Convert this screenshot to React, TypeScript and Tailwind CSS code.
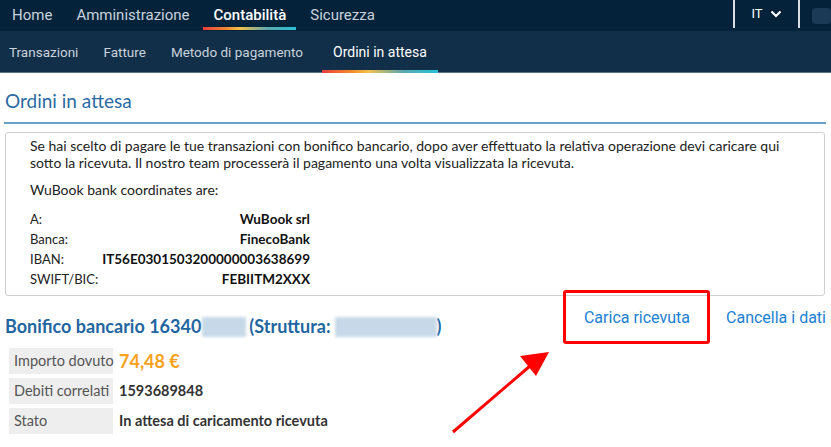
import React from "react";

const grad = "bg-[linear-gradient(90deg,#ea3d3f_0%,#f08a2c_25%,#f3c04a_40%,#5aa7b0_70%,#27c3d6_100%)]";

export default function App() {
  const top = ["Home", "Amministrazione", "Contabilità", "Sicurezza"];
  const sub = ["Transazioni", "Fatture", "Metodo di pagamento", "Ordini in attesa"];
  return (
    <div className="relative w-[831px] h-[447px] overflow-hidden bg-white font-['Lato',sans-serif]">
      {/* top nav */}
      <div className="h-[31px] bg-[#04233b] flex items-stretch font-['Roboto',sans-serif] text-[15px]">
        <div className="flex items-stretch pl-[12px] gap-[24px]">
          {top.map((t) => (
            <div key={t} className="relative flex items-center">
              <span className={t === "Contabilità" ? "text-white font-medium" : "text-[#c9d2db]"}>{t}</span>
              {t === "Contabilità" && (
                <div className={`absolute left-[-11px] right-[-10px] bottom-[1px] h-[3px] ${grad}`} />
              )}
            </div>
          ))}
        </div>
        <div className="ml-auto flex items-stretch">
          <div className="w-[67px] border-l-2 border-r-2 border-[#d8dde2] h-[28px] flex items-center justify-center gap-[7px]">
            <span className="text-white text-[13px]">IT</span>
            <svg width="12" height="8" viewBox="0 0 12 8"><path d="M1.5 1.5 6 6l4.5-4.5" stroke="#fff" strokeWidth="2.2" fill="none" /></svg>
          </div>
          <div className="w-[31px] flex items-center pl-[12px]">
            <div className="w-[20px] h-[16px] rounded bg-[#1b3a55]" />
          </div>
        </div>
      </div>
      {/* sub nav */}
      <div className="h-[42px] bg-[#112f48] border-b border-[#5c7588] flex items-stretch font-['Roboto',sans-serif] text-[13.5px] pl-[9px] gap-[25px]">
        {sub.map((t) => (
          <div key={t} className={`relative flex items-center pt-[1px] ${t === "Ordini in attesa" ? "ml-[5px]" : ""}`}>
            <span className={t === "Ordini in attesa" ? "text-white text-[14px]" : "text-[#c9d2db]"}>{t}</span>
            {t === "Ordini in attesa" && (
              <div className={`absolute left-[-11px] right-[-11px] bottom-[-1px] h-[3px] ${grad}`} />
            )}
          </div>
        ))}
      </div>
      {/* heading */}
      <div className="px-[4px] pt-[15px]">
        <div className="text-[19px] text-[#2b6aa3] pl-[1px] leading-[26px] pb-[8px] border-b-2 border-[#6ba1c3] mr-[1px]">Ordini in attesa</div>
      </div>
      {/* info box */}
      <div className="mx-[5px] mt-[8px] mr-[6px] border border-[#cfcfcf] rounded-[3px] pl-[24px] pr-[30px] pt-[4px] pb-[6px] text-[14px] text-[#222] leading-[17px]">
        <p>Se hai scelto di pagare le tue transazioni con bonifico bancario, dopo aver effettuato la relativa operazione devi caricare qui sotto la ricevuta. Il nostro team processerà il pagamento una volta visualizzata la ricevuta.</p>
        <p className="mt-[10px]">WuBook bank coordinates are:</p>
        <table className="mt-[11px] text-[13px]">
          <tbody>
            {[
              ["A:", "WuBook srl"],
              ["Banca:", "FinecoBank"],
              ["IBAN:", "IT56E0301503200000003638699"],
              ["SWIFT/BIC:", "FEBIITM2XXX"],
            ].map(([a, b]) => (
              <tr key={a} className="h-[20px]">
                <td className="pr-[4px] text-[#222]">{a}</td>
                <td className="text-right font-bold text-[#111] text-[13.5px]">{b}</td>
              </tr>
            ))}
          </tbody>
        </table>
      </div>
      {/* bonifico row */}
      <div className="flex items-center mt-[9px] px-[5px] h-[36px]">
        <div className="flex items-center text-[18px] font-bold text-[#1f66a1] pt-[7px]">
          <span>Bonifico bancario 16340</span>
          <span className="inline-block w-[44px] h-[20px] bg-[#c7d9e8] blur-[1.5px] ml-[1px]" />
          <span className="ml-[3px]">(Struttura:</span>
          <span className="inline-block w-[102px] h-[20px] bg-[#c7d9e8] blur-[1.5px] ml-[4px]" />
          <span>)</span>
        </div>
        <div className="ml-auto flex items-center text-[16px] text-[#1b80d2] font-['Roboto',sans-serif] gap-[36px] self-start mt-[1px]">
          <span>Carica ricevuta</span>
          <span className="whitespace-nowrap">Cancella i dati</span>
        </div>
      </div>
      {/* details table */}
      <div className="pl-[9px] mt-[7px] flex flex-col gap-[4px] text-[14.5px]">
        <div className="flex items-center h-[26px]">
          <div className="w-[104px] h-full bg-[#eeeeee] flex items-center pl-[5px] text-[#555] whitespace-nowrap">Importo dovuto</div>
          <div className="pl-[6px] text-[18px] font-bold text-[#f9a11b]">74,48 €</div>
        </div>
        <div className="flex items-center h-[26px]">
          <div className="w-[104px] h-full bg-[#eeeeee] flex items-center pl-[5px] text-[#555] whitespace-nowrap">Debiti correlati</div>
          <div className="pl-[6px] font-bold text-[#333]">1593689848</div>
        </div>
        <div className="flex items-center h-[26px]">
          <div className="w-[104px] h-full bg-[#eeeeee] flex items-center pl-[5px] text-[#555]">Stato</div>
          <div className="pl-[6px] font-bold text-[#333]">In attesa di caricamento ricevuta</div>
        </div>
      </div>
      {/* annotations */}
      <div className="absolute left-[563px] top-[290px] w-[147px] h-[54px] border-[3px] border-[#ff0000] rounded-[3px]" />
      <svg className="absolute left-0 top-0 pointer-events-none" width="831" height="447">
        <line x1="453" y1="432" x2="530" y2="366" stroke="#ff0000" strokeWidth="3" />
        <polygon points="549,352 520,356 536,376" fill="#ff0000" />
      </svg>
    </div>
  );
}
